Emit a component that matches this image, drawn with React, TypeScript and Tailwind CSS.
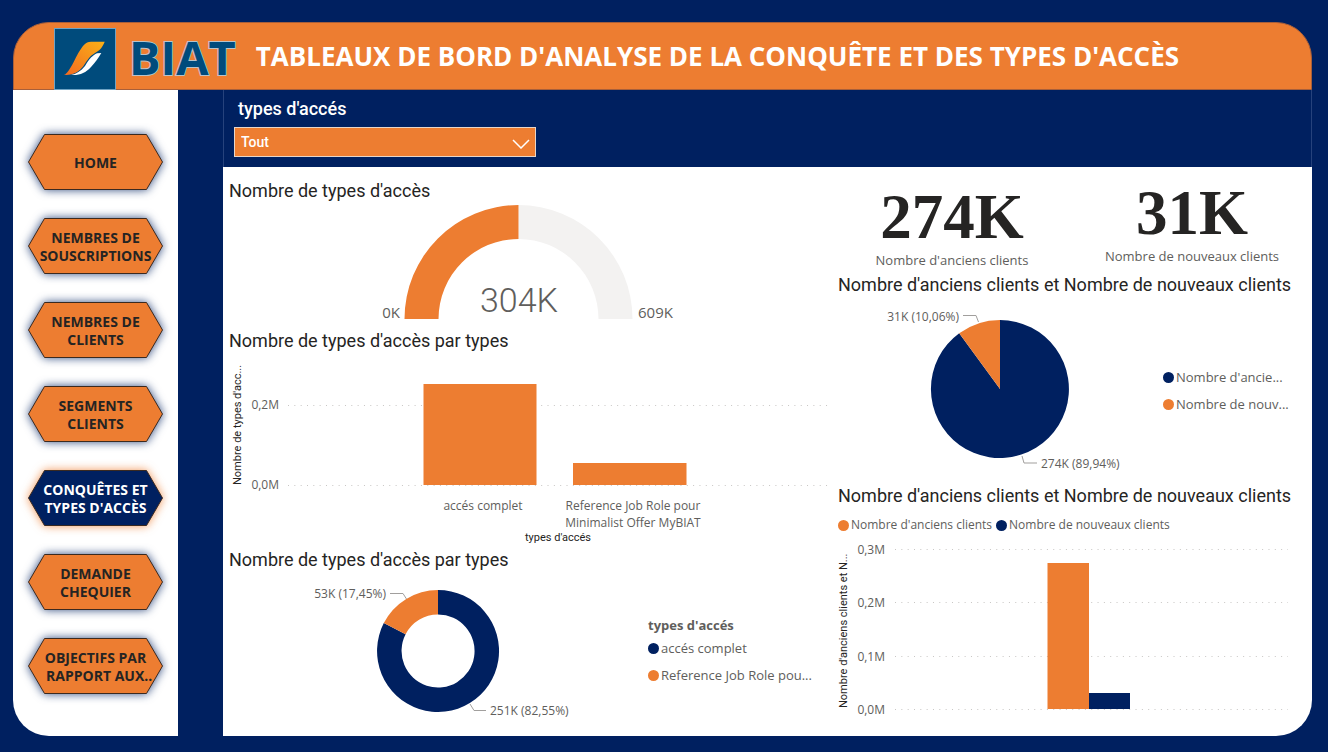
import React from "react";

const ORANGE = "#ED7D31";
const NAVY = "#002060";

type NavItem = { lines: string[]; active?: boolean };

const navItems: NavItem[] = [
  { lines: ["HOME"] },
  { lines: ["NEMBRES DE", "SOUSCRIPTIONS"] },
  { lines: ["NEMBRES DE", "CLIENTS"] },
  { lines: ["SEGMENTS", "CLIENTS"] },
  { lines: ["CONQUÊTES ET", "TYPES D'ACCÈS"], active: true },
  { lines: ["DEMANDE", "CHEQUIER"] },
  { lines: ["OBJECTIFS PAR", "\u00a0\u00a0RAPPORT AUX.."] },
];

function NavButton({ lines, active }: NavItem) {
  return (
    <button
      type="button"
      aria-current={active ? "page" : undefined}
      className={
        "relative flex h-14 w-[135px] items-center justify-center whitespace-nowrap pt-0.5 text-[14px] font-bold leading-[18px] " +
        (active ? "text-white" : "text-[#252423]")
      }
    >
      <svg
        viewBox="0 0 135 56"
        aria-hidden="true"
        className={
          "absolute inset-0 h-full w-full overflow-visible " +
          (active
            ? "drop-shadow-[0_0_5px_rgba(237,125,49,0.8)]"
            : "drop-shadow-[0_0_5px_rgba(0,32,96,0.8)]")
        }
      >
        <polygon
          points="0.5,28 16.5,0.5 118.5,0.5 134.5,28 118.5,55.5 16.5,55.5"
          fill={active ? NAVY : ORANGE}
          stroke="#3b2a20"
          strokeWidth="1"
        />
      </svg>
      <span className="relative">
        {lines.map((line) => (
          <span key={line} className="block">
            {line}
          </span>
        ))}
      </span>
    </button>
  );
}

function Logo() {
  return (
    <div className="flex shrink-0 items-center gap-[13px]">
      <svg viewBox="0 0 62 64" aria-hidden="true" className="h-16 w-[62px] shrink-0">
        <defs>
          <linearGradient id="swoosh" x1="0" y1="1" x2="1" y2="0">
            <stop offset="0" stopColor="#F26A21" />
            <stop offset="1" stopColor="#FBB117" />
          </linearGradient>
        </defs>
        <rect x="0.5" y="1.5" width="61" height="61" fill="#004B7C" stroke="#6FA3C4" />
        <path
          d="M17 48 C22 47 27 44 31 39 C35 32 39 28 43 26.300 L47.300 26 C44 31.500 41 35.500 37 40 C31.500 46 26 48.500 17 48Z"
          fill="#fff"
        />
        <path
          d="M10 47.800 C14.500 46 17.500 39 24.300 26 C29 18.500 31 15 37 14.700 L50.700 14.700 C48.500 20.500 45.500 23.500 41 26 C36 29 34 32 29.300 39.300 C25 45 19 48.500 10 47.800Z"
          fill="url(#swoosh)"
        />
      </svg>
      <span className="pb-1 text-[47px] font-bold leading-[60px] text-[#004B7C] [-webkit-text-stroke:2px_#B9C3C9] [paint-order:stroke_fill]">
        BIAT
      </span>
    </div>
  );
}

function ChartTitle({ children }: { children: React.ReactNode }) {
  return <h2 className="px-1.5 font-[Roboto,sans-serif] text-[18px] leading-6 text-[#252423]">{children}</h2>;
}

function GridLine({ x1, x2, y }: { x1: number; x2: number; y: number }) {
  return <line x1={x1} x2={x2} y1={y} y2={y} stroke="#C8C6C4" strokeWidth="1" strokeDasharray="1 5.33" />;
}

function LegendItem({ color, children }: { color: string; children: React.ReactNode }) {
  return (
    <li className="flex items-center gap-0.5 whitespace-nowrap">
      <svg viewBox="0 0 11 11" aria-hidden="true" className="size-[11px] shrink-0">
        <circle cx="5.5" cy="5.5" r="5.5" fill={color} />
      </svg>
      {children}
    </li>
  );
}

function Gauge() {
  return (
    <svg viewBox="0 0 609 126" className="block w-full" role="img" aria-label="Nombre de types d'accès">
      <path d="M295.500 2 A114 114 0 0 1 409.500 116 H375.500 A80 80 0 0 0 295.500 36Z" fill="#F3F2F1" />
      <path d="M181.500 116 A114 114 0 0 1 295.500 2 V36 A80 80 0 0 0 215.500 116Z" fill={ORANGE} />
      <g fill="#605E5C" fontSize="15">
        <text x="177" y="115" textAnchor="end">0K</text>
        <text x="415" y="115">609K</text>
        <text x="296" y="109" textAnchor="middle" fontSize="34" fontWeight="300" fontFamily="Roboto, sans-serif">
          304K
        </text>
      </g>
    </svg>
  );
}

function AccessBarChart() {
  return (
    <svg viewBox="0 0 609 195" className="block w-full" role="img" aria-label="Nombre de types d'accès par types">
      <GridLine x1={65} x2={609} y={52.5} />
      <GridLine x1={65} x2={609} y={132.5} />
      <rect x="200.500" y="31" width="113" height="101" fill={ORANGE} />
      <rect x="350" y="110" width="113.500" height="22" fill={ORANGE} />
      <g fill="#605E5C" fontSize="12">
        <text x="56" y="56" textAnchor="end">0,2M</text>
        <text x="56" y="136" textAnchor="end">0,0M</text>
        <text x="260" y="157" textAnchor="middle">accés complet</text>
        <text x="410" y="157" textAnchor="middle">Reference Job Role pour</text>
        <text x="410" y="174" textAnchor="middle">Minimalist Offer MyBIAT</text>
      </g>
      <g fill="#252423" fontSize="11" fontFamily="Roboto, sans-serif">
        <text x="335" y="188" textAnchor="middle">types d'accés</text>
        <text transform="translate(18 132) rotate(-90)">Nombre de types d'acc...</text>
      </g>
    </svg>
  );
}

function AccessDonut() {
  return (
    <svg viewBox="0 0 425 158" className="block w-full" role="img" aria-label="Répartition par types">
      <path
        d="M215 18 A61 61 0 1 1 160.800 51.100 L182.600 62.300 A36.500 36.500 0 1 0 215 42.500Z"
        fill={NAVY}
      />
      <path d="M160.800 51.100 A61 61 0 0 1 215 18 V42.500 A36.500 36.500 0 0 0 182.600 62.300Z" fill={ORANGE} />
      <g fill="none" stroke="#A19F9D">
        <polyline points="167,21.5 180,21.5 183.500,27" />
        <polyline points="247,132 251,138.500 263,138.500" />
      </g>
      <g fill="#605E5C" fontSize="12">
        <text x="163" y="26" textAnchor="end">53K (17,45%)</text>
        <text x="267" y="143">251K (82,55%)</text>
      </g>
    </svg>
  );
}

function ClientsPie() {
  return (
    <svg viewBox="0 0 331 178" className="block w-full" role="img" aria-label="Anciens et nouveaux clients">
      <path d="M168 92 V23 A69 69 0 1 1 127.200 36.300Z" fill={NAVY} />
      <path d="M168 92 L127.200 36.300 A69 69 0 0 1 168 23Z" fill={ORANGE} />
      <g fill="none" stroke="#A19F9D">
        <polyline points="131,18.500 144,18.500 146.500,25" />
        <polyline points="190,159 192,166 205,166" />
      </g>
      <g fill="#605E5C" fontSize="12">
        <text x="127" y="24" textAnchor="end">31K (10,06%)</text>
        <text x="209" y="171">274K (89,94%)</text>
      </g>
    </svg>
  );
}

const clientTicks = [
  { label: "0,3M", y: 10.5 },
  { label: "0,2M", y: 63.5 },
  { label: "0,1M", y: 117.5 },
  { label: "0,0M", y: 170.5 },
];

function ClientsBarChart() {
  return (
    <svg viewBox="0 0 480 190" className="mt-[5px] block w-full" role="img" aria-label="Anciens et nouveaux clients">
      {clientTicks.map(({ label, y }) => (
        <g key={label}>
          <GridLine x1={63} x2={456} y={y} />
          <text x="53" y={y + 4} textAnchor="end" fontSize="12" fill="#605E5C">
            {label}
          </text>
        </g>
      ))}
      <rect x="215.500" y="24" width="41.500" height="146" fill={ORANGE} />
      <rect x="257" y="154" width="41" height="16" fill={NAVY} />
      <text
        transform="translate(15 169) rotate(-90)"
        fontSize="11"
        fill="#252423"
        fontFamily="Roboto, sans-serif"
      >
        Nombre d'anciens clients et N...
      </text>
    </svg>
  );
}

function Kpi({ value, label }: { value: string; label: string }) {
  return (
    <div className="flex flex-col items-center">
      <p className="font-['Liberation_Serif',serif] text-[63px] font-bold leading-[66px] text-[#252423]">{value}</p>
      <p className="text-[13px] leading-5 text-[#605E5C]">{label}</p>
    </div>
  );
}

export default function App() {
  return (
    <div className="min-h-screen bg-[#002060] pb-4 pl-[13px] pr-4 pt-[22px] font-['Open_Sans',sans-serif]">
      <header className="flex h-[68px] items-center gap-5 rounded-t-[36px] border border-[#a85f3a] bg-[#ED7D31] pl-10 pt-1.5">
        <Logo />
        <h1 className="whitespace-nowrap pb-1.5 text-[26px] font-bold leading-8 text-white">
          TABLEAUX DE BORD D'ANALYSE DE LA CONQUÊTE ET DES TYPES D'ACCÈS
        </h1>
      </header>

      <div className="flex gap-[45px]">
        <nav className="flex w-[165px] shrink-0 flex-col items-center gap-7 rounded-bl-[36px] bg-white pt-11">
          {navItems.map((item) => (
            <NavButton key={item.lines.join(" ")} {...item} />
          ))}
        </nav>

        <main className="min-w-0 flex-1">
          <section className="h-[77px] border-x border-[#26427c] px-2.5 pt-[7px]">
            <label
              htmlFor="types"
              className="block px-1 font-[Roboto,sans-serif] text-[18px] font-medium leading-6 text-white"
            >
              types d'accés
            </label>
            <div className="relative mt-1.5 h-[30px] w-[302px]">
              <select
                id="types"
                className="h-full w-full appearance-none border border-[#E8D5C8] bg-[#ED7D31] px-1.5 font-[Roboto,sans-serif] text-sm font-medium text-white"
              >
                <option>Tout</option>
              </select>
              <svg
                viewBox="0 0 18 10"
                aria-hidden="true"
                className="pointer-events-none absolute right-1.5 top-3 h-2.5 w-[18px]"
              >
                <polyline points="1,1 9,9 17,1" fill="none" stroke="#fff" strokeWidth="1.500" />
              </svg>
            </div>
          </section>

          <div className="grid grid-cols-[609fr_480fr] rounded-br-[36px] bg-white">
            <div>
              <section className="pt-3">
                <ChartTitle>Nombre de types d'accès</ChartTitle>
                <Gauge />
              </section>
              <section>
                <ChartTitle>Nombre de types d'accès par types</ChartTitle>
                <AccessBarChart />
              </section>
              <section className="pb-1.5">
                <ChartTitle>Nombre de types d'accès par types</ChartTitle>
                <div className="grid grid-cols-[425fr_184fr]">
                  <AccessDonut />
                  <div className="pt-11 text-[13px] leading-[18px] text-[#605E5C]">
                    <h3 className="font-bold">types d'accés</h3>
                    <ul className="mt-[5px] flex flex-col gap-[9px]">
                      <LegendItem color={NAVY}>accés complet</LegendItem>
                      <LegendItem color={ORANGE}>Reference Job Role pou...</LegendItem>
                    </ul>
                  </div>
                </div>
              </section>
            </div>

            <div>
              <section className="grid grid-cols-2 items-start pb-[3px]">
                <div className="pt-[17px]">
                  <Kpi value="274K" label="Nombre d'anciens clients" />
                </div>
                <div className="pt-[13px]">
                  <Kpi value="31K" label="Nombre de nouveaux clients" />
                </div>
              </section>
              <section>
                <ChartTitle>Nombre d'anciens clients et Nombre de nouveaux clients</ChartTitle>
                <div className="grid grid-cols-[331fr_149fr]">
                  <ClientsPie />
                  <ul className="flex flex-col gap-[9px] pt-[71px] text-[13px] leading-[18px] text-[#605E5C]">
                    <LegendItem color={NAVY}>Nombre d'ancie...</LegendItem>
                    <LegendItem color={ORANGE}>Nombre de nouv...</LegendItem>
                  </ul>
                </div>
              </section>
              <section className="pt-[9px]">
                <ChartTitle>Nombre d'anciens clients et Nombre de nouveaux clients</ChartTitle>
                <ul className="mt-2 flex gap-1 px-1.5 text-[12px] leading-[18px] text-[#605E5C]">
                  <LegendItem color={ORANGE}>Nombre d'anciens clients</LegendItem>
                  <LegendItem color={NAVY}>Nombre de nouveaux clients</LegendItem>
                </ul>
                <ClientsBarChart />
              </section>
            </div>
          </div>
        </main>
      </div>
    </div>
  );
}
